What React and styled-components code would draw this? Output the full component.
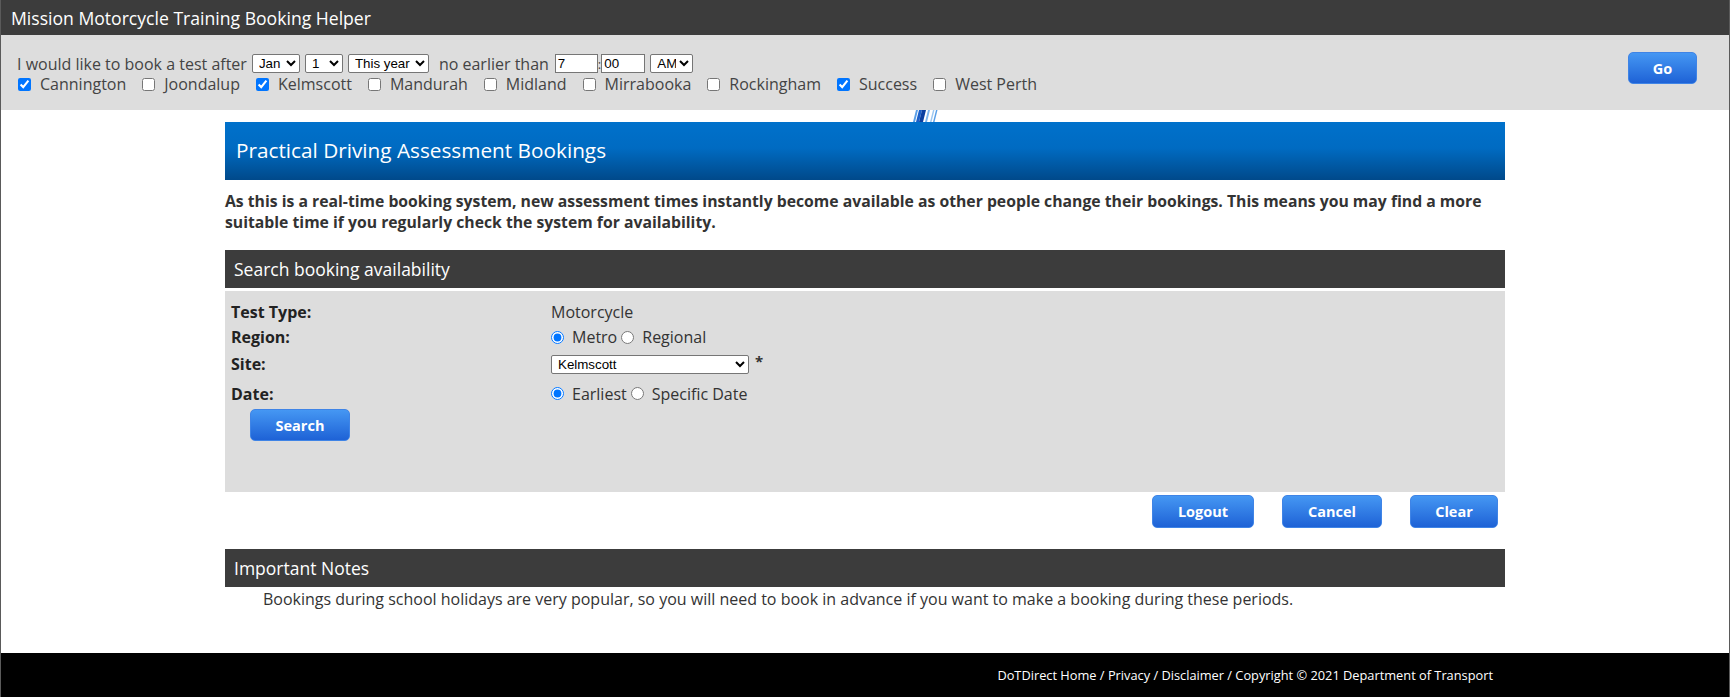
import React from "react";
import styled, { createGlobalStyle } from "styled-components";

const Global = createGlobalStyle`
  html, body { margin: 0; padding: 0; background: #fff; }
  body { font-family: "Open Sans", "Noto Sans", sans-serif; }
  * { box-sizing: border-box; }
`;

const Root = styled.div`
  min-height: 100vh;
  display: flex;
  flex-direction: column;
  border-left: 1px solid #5a5a5a;
  border-right: 1px solid #5a5a5a;
  color: #333;
  font-family: "Open Sans", "Noto Sans", sans-serif;
`;

const TopBar = styled.div`
  height: 35px;
  background: #3c3c3c;
  color: #fff;
  font-size: 17.6px;
  padding: 0 10px;
  display: flex;
  align-items: center;
`;

const ControlPanel = styled.div`
  height: 75px;
  background: #dddddd;
  padding: 18px 32px 0 16px;
  display: flex;
  justify-content: space-between;
  align-items: flex-start;
`;

const Controls = styled.div`
  display: flex;
  flex-direction: column;
`;

const ControlRow = styled.div`
  display: flex;
  align-items: center;
  height: ${(p) => p.$h || 22}px;
  font-size: 16px;
  color: #444;
  white-space: nowrap;
`;

const Text = styled.span`
  margin-right: ${(p) => p.$mr || 0}px;
  margin-left: ${(p) => p.$ml || 0}px;
  font-size: ${(p) => p.$fs || 16}px;
`;

const SmallSelect = styled.select`
  height: 19px;
  width: ${(p) => p.$w}px;
  margin-right: ${(p) => p.$mr || 0}px;
  margin-left: ${(p) => p.$ml || 0}px;
  font-family: "Liberation Sans", Arial, sans-serif;
  font-size: 13.33px;
  color: #000;
  background: #fff;
  border: 1px solid #767676;
  border-radius: 2px;
  padding: 0 0 0 2px;
`;

const TimeInput = styled.input`
  height: 19px;
  width: ${(p) => p.$w}px;
  font-family: "Liberation Sans", Arial, sans-serif;
  font-size: 13.33px;
  color: #000;
  border: 1px solid #767676;
  padding: 0 2px;
  margin: 0;
`;

const CheckItem = styled.label`
  display: flex;
  align-items: center;
  gap: 9px;
  margin-right: 16px;
  margin-left: ${(p) => (p.$first ? 1 : 0)}px;
`;

const Box = styled.input`
  width: 13px;
  height: 13px;
  margin: 0;
`;

const BlueButton = styled.button`
  width: ${(p) => p.$w}px;
  height: ${(p) => p.$h || 33}px;
  border: 1px solid #3f84e6;
  border-radius: 5px;
  background: linear-gradient(#4597f3, #1e62d6);
  color: #fff;
  font-family: "Open Sans", sans-serif;
  font-weight: 700;
  font-size: 14.5px;
  cursor: pointer;
  padding: 0;
  margin-top: ${(p) => p.$mt || 0}px;
  margin-left: ${(p) => p.$ml || 0}px;
`;

const Main = styled.main`
  width: 1280px;
  margin: 0 auto;
  display: flex;
  flex-direction: column;
`;

const DecorStrip = styled.div`
  height: 12px;
  padding-left: 687px;
  display: flex;
`;

const BlueHeader = styled.div`
  height: 58px;
  background: linear-gradient(#0071cb 0%, #006bc2 45%, #00498a 100%);
  color: #fff;
  font-size: 20.75px;
  padding: 0 0 2px 11px;
  display: flex;
  align-items: center;
`;

const Intro = styled.p`
  margin: 11px 0 17px;
  font-size: 15.75px;
  font-weight: 700;
  line-height: 21px;
  color: #333;
`;

const SectionBar = styled.div`
  height: 38px;
  background: #3c3c3c;
  color: #fff;
  font-size: 17.5px;
  padding-left: 9px;
  display: flex;
  align-items: center;
  margin-top: ${(p) => p.$mt || 0}px;
`;

const FormArea = styled.div`
  margin-top: 3px;
  height: 201px;
  background: #dddddd;
  padding: 8px 0 0 6px;
`;

const FormGrid = styled.div`
  display: grid;
  grid-template-columns: 320px 1fr;
  grid-template-rows: 25px 26px 28px 31px;
  align-items: center;
`;

const FieldLabel = styled.div`
  font-weight: 700;
  font-size: 16px;
  color: #222;
`;

const FieldValue = styled.div`
  display: flex;
  align-items: center;
  font-size: 16px;
  color: #333;
`;

const Radio = styled.input`
  width: 13px;
  height: 13px;
  margin: 0 8px 0 0;
`;

const RadioText = styled.span`
  margin-right: 4px;
`;

const SiteSelect = styled.select`
  width: 198px;
  height: 19px;
  font-family: "Liberation Sans", Arial, sans-serif;
  font-size: 13.33px;
  color: #000;
  background: #fff;
  border: 1px solid #767676;
  border-radius: 2px;
  padding: 0 0 0 2px;
`;

const Asterisk = styled.span`
  font-weight: 700;
  font-size: 15px;
  margin-left: 6px;
  align-self: flex-start;
  margin-top: -4px;
`;

const ButtonRow = styled.div`
  display: flex;
  justify-content: flex-end;
  gap: 28px;
  padding-right: 7px;
  margin-top: 3px;
`;

const Note = styled.p`
  margin: 1px 0 0;
  padding-left: 38px;
  font-size: 16px;
  line-height: 22px;
  color: #333;
`;

const Footer = styled.footer`
  margin-top: auto;
  height: 44px;
  background: #000;
`;

const FooterInner = styled.div`
  width: 1280px;
  height: 100%;
  margin: 0 auto;
  display: flex;
  align-items: center;
  justify-content: flex-end;
  padding-right: 12px;
  color: #fff;
  font-size: 12.8px;
`;

const sites = ["Cannington", "Joondalup", "Kelmscott", "Mandurah", "Midland", "Mirrabooka", "Rockingham", "Success", "West Perth"];
const checked = ["Cannington", "Kelmscott", "Success"];

function Stripes() {
  return (
    <svg width="30" height="12" viewBox="0 0 30 12">
      <polygon points="4,0 6,0 3,12 1,12" fill="#5aa0e8" />
      <polygon points="7,0 10,0 7,12 4,12" fill="#1a5fc8" />
      <polygon points="10,0 14,0 11,12 7,12" fill="#0b3fa0" />
      <polygon points="16,0 18,0 15,12 13,12" fill="#7fb6ee" />
      <polygon points="21,0 22.5,0 19.5,12 18,12" fill="#9cc8f2" />
      <polygon points="24,0 25.5,0 22.5,12 21,12" fill="#5aa0e8" />
    </svg>
  );
}

export default function App() {
  return (
    <>
      <Global />
      <Root>
        <TopBar>Mission Motorcycle Training Booking Helper</TopBar>
        <ControlPanel>
          <Controls>
            <ControlRow $h={21}>
              <Text $mr={5}>I would like to book a test after</Text>
              <SmallSelect $w={48} $mr={5} defaultValue="Jan">
                <option>Jan</option>
              </SmallSelect>
              <SmallSelect $w={38} $mr={5} defaultValue="1">
                <option>1</option>
              </SmallSelect>
              <SmallSelect $w={81} $mr={5} defaultValue="This year">
                <option>This year</option>
              </SmallSelect>
              <Text $ml={5} $mr={6}>no earlier than</Text>
              <TimeInput $w={43} defaultValue="7" />
              <Text $fs={13}>:</Text>
              <TimeInput $w={44} defaultValue="00" />
              <SmallSelect $w={43} $ml={5} defaultValue="AM">
                <option>AM</option>
              </SmallSelect>
            </ControlRow>
            <ControlRow $h={20}>
              {sites.map((s, i) => (
                <CheckItem key={s} $first={i === 0}>
                  <Box type="checkbox" defaultChecked={checked.includes(s)} />
                  {s}
                </CheckItem>
              ))}
            </ControlRow>
          </Controls>
          <BlueButton $w={69} $h={32} $mt={-1}>Go</BlueButton>
        </ControlPanel>
        <Main>
          <DecorStrip>
            <Stripes />
          </DecorStrip>
          <BlueHeader>Practical Driving Assessment Bookings</BlueHeader>
          <Intro>
            As this is a real-time booking system, new assessment times instantly become available as other people change their bookings. This means you may find a more suitable time if you regularly check the system for availability.
          </Intro>
          <SectionBar>Search booking availability</SectionBar>
          <FormArea>
            <FormGrid>
              <FieldLabel>Test Type:</FieldLabel>
              <FieldValue>Motorcycle</FieldValue>
              <FieldLabel>Region:</FieldLabel>
              <FieldValue>
                <Radio type="radio" name="region" defaultChecked />
                <RadioText>Metro</RadioText>
                <Radio type="radio" name="region" />
                <RadioText>Regional</RadioText>
              </FieldValue>
              <FieldLabel>Site:</FieldLabel>
              <FieldValue>
                <SiteSelect defaultValue="Kelmscott">
                  <option>Kelmscott</option>
                </SiteSelect>
                <Asterisk>*</Asterisk>
              </FieldValue>
              <FieldLabel>Date:</FieldLabel>
              <FieldValue>
                <Radio type="radio" name="date" defaultChecked />
                <RadioText>Earliest</RadioText>
                <Radio type="radio" name="date" />
                <RadioText>Specific Date</RadioText>
              </FieldValue>
            </FormGrid>
            <BlueButton $w={100} $h={32} $ml={19}>Search</BlueButton>
          </FormArea>
          <ButtonRow>
            <BlueButton $w={102}>Logout</BlueButton>
            <BlueButton $w={100}>Cancel</BlueButton>
            <BlueButton $w={88}>Clear</BlueButton>
          </ButtonRow>
          <SectionBar $mt={21}>Important Notes</SectionBar>
          <Note>
            Bookings during school holidays are very popular, so you will need to book in advance if you want to make a booking during these periods.
          </Note>
        </Main>
        <Footer>
          <FooterInner>DoTDirect Home / Privacy / Disclaimer / Copyright © 2021 Department of Transport</FooterInner>
        </Footer>
      </Root>
    </>
  );
}
